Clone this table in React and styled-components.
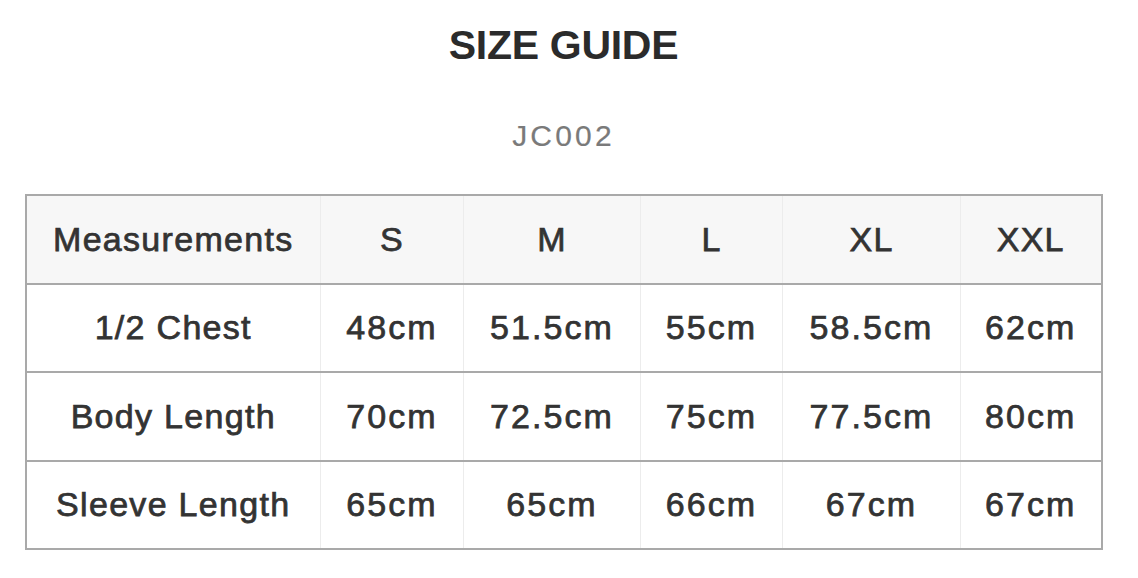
import React from "react";
import styled, { createGlobalStyle } from "styled-components";

const Global = createGlobalStyle`
  html, body { margin: 0; padding: 0; background: #ffffff; }
  body { font-family: "Liberation Sans", Arial, sans-serif; }
`;

const Page = styled.div`
  width: 1138px;
  box-sizing: border-box;
  padding: 22px 36px 0 25px;
  display: flex;
  flex-direction: column;
  align-items: center;
`;

const Title = styled.h1`
  margin: 0;
  font-size: 41px;
  line-height: 46px;
  font-weight: 700;
  color: #2b2b2b;
  letter-spacing: -0.3px;
`;

const Code = styled.div`
  margin-top: 51px;
  font-size: 30px;
  line-height: 34px;
  color: #7a7a7a;
  letter-spacing: 3.2px;
  -webkit-text-stroke: 0.2px #7a7a7a;
`;

const Table = styled.table`
  margin-top: 41px;
  width: 1077px;
  table-layout: fixed;
  border-collapse: collapse;
  border: 2px solid #a9a9a9;
`;

const Col = styled.col`
  width: ${(p) => p.$w}px;
`;

const Row = styled.tr`
  background: ${(p) => (p.$head ? "#f7f7f7" : "#ffffff")};
  border-top: 2px solid #a9a9a9;
`;

const Cell = styled.td`
  height: 86.5px;
  padding: 0;
  text-align: center;
  vertical-align: middle;
  font-size: 34px;
  font-weight: 400;
  color: #333333;
  -webkit-text-stroke: 0.75px #333333;
  letter-spacing: ${(p) => (p.$num ? "2.1px" : "1.3px")};
  border-left: 1px solid #ececec;
  &:first-child { border-left: none; }
`;

const widths = [295, 143, 177, 142, 178, 141];
const header = ["Measurements", "S", "M", "L", "XL", "XXL"];
const rows = [
  ["1/2 Chest", "48cm", "51.5cm", "55cm", "58.5cm", "62cm"],
  ["Body Length", "70cm", "72.5cm", "75cm", "77.5cm", "80cm"],
  ["Sleeve Length", "65cm", "65cm", "66cm", "67cm", "67cm"],
];

export default function App() {
  return (
    <>
      <Global />
      <Page>
        <Title>SIZE GUIDE</Title>
        <Code>JC002</Code>
        <Table>
          <colgroup>
            {widths.map((w, i) => (
              <Col key={i} $w={w} />
            ))}
          </colgroup>
          <tbody>
            <Row $head>
              {header.map((h) => (
                <Cell key={h}>{h}</Cell>
              ))}
            </Row>
            {rows.map((r) => (
              <Row key={r[0]}>
                {r.map((c, i) => (
                  <Cell key={i} $num={i > 0}>
                    {c}
                  </Cell>
                ))}
              </Row>
            ))}
          </tbody>
        </Table>
      </Page>
    </>
  );
}
